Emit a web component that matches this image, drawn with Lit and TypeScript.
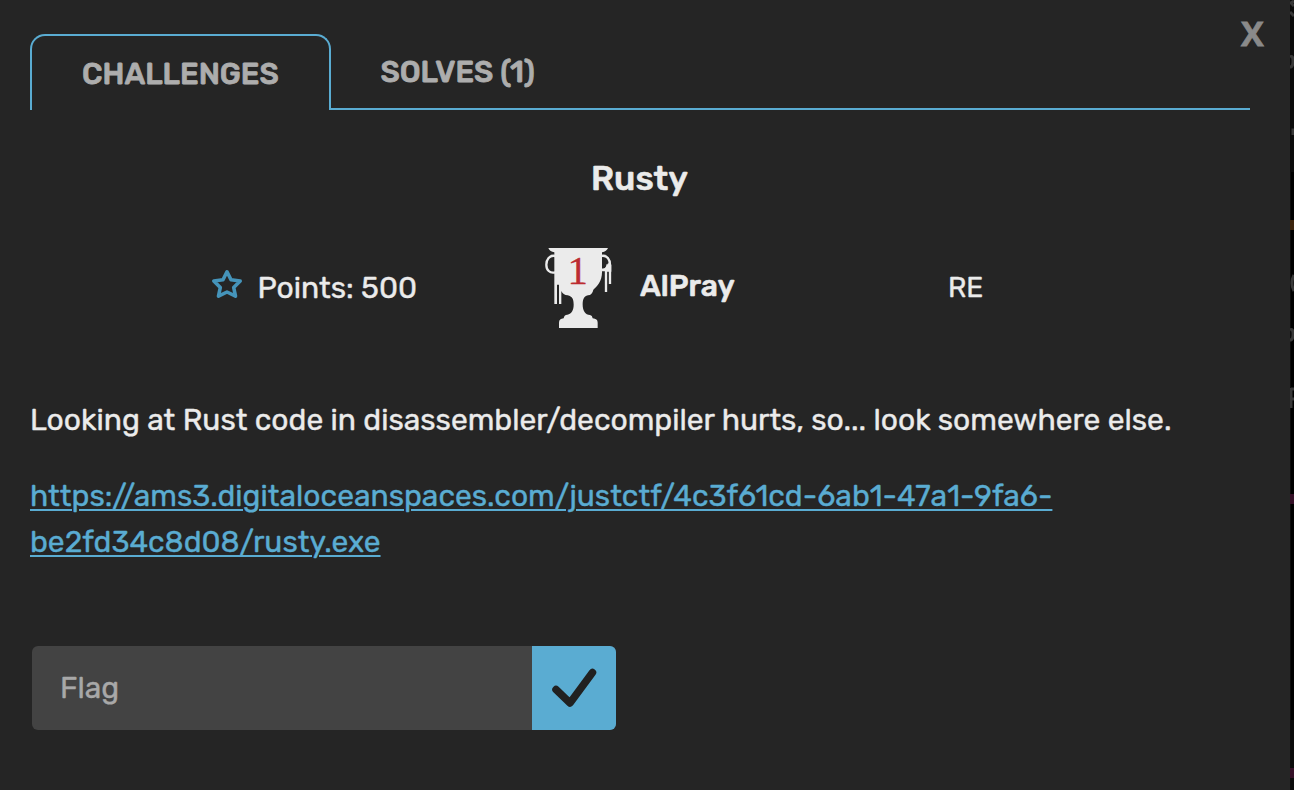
import { LitElement, html, css } from "lit";
import { customElement } from "lit/decorators.js";

@customElement("app-root")
export class AppRoot extends LitElement {
  static styles = css`
    :host { display: block; width: 1294px; height: 790px; overflow: hidden; background: #000; font-family: Rubik, Roboto, sans-serif; color: #ebebeb; -webkit-text-stroke-width: 0.4px; }
    * { box-sizing: border-box; }
    .page { display: flex; height: 790px; }
    .modal { width: 1290px; height: 790px; background: #252525; padding: 34px 40px 0 30px; position: relative; }
    .close { position: absolute; left: 1241px; top: 13px; font: 700 34px/40px "Open Sans", sans-serif; color: #8a8a8a; border: 0; background: none; padding: 0; -webkit-text-stroke-width: 0.8px; }
    .tabs { display: flex; height: 76px; font-size: 30px; font-weight: 500; color: #adadad; white-space: nowrap; -webkit-text-stroke-width: 0.8px; }
    .tab { width: 301px; border: 2px solid #5aacd2; border-bottom: 0; border-radius: 15px 15px 0 0; padding: 20px 0 0 50px; line-height: 36px; }
    .tab2 { flex: 1; border-bottom: 2px solid #5aacd2; padding: 20px 0 0 49.500px; line-height: 36px; }
    h1 { margin: 46px 0 0; padding-right: 1px; text-align: center; font-size: 34.300px; line-height: 46px; font-weight: 500; -webkit-text-stroke-width: 0.6px; }
    .info { display: flex; align-items: center; margin-top: 44px; height: 84px; padding-left: 181px; font-size: 30px; white-space: nowrap; }
    .points { display: flex; align-items: center; width: 334px; }
    .star { width: 32px; height: 32px; margin-right: 14.500px; flex: none; position: relative; top: -3px; }
    .cup { width: 70px; height: 82px; flex: none; }
    .place { font-family: "Liberation Serif", serif; font-size: 122px; fill: #bc2c30; stroke: #bc2c30; -webkit-text-stroke-width: 3.200px; }
    .first { display: flex; align-items: center; width: 403px; font-weight: 500; -webkit-text-stroke-width: 0.6px; }
    .first span { padding: 0 0 4px 25px; }
    .cat { font-size: 28px; padding-bottom: 2px; }
    p { margin: 0; font-size: 30px; line-height: 46px; white-space: nowrap; }
    .desc { margin-top: 67px; }
    .link { margin-top: 30px; }
    a { color: #5aacd2; text-decoration: underline; text-decoration-thickness: 2px; text-underline-offset: 3px; }
    .form { display: flex; margin: 81px 0 0 2px; width: 584px; height: 84px; border-radius: 6px; overflow: hidden; background: #434343; }
    .field { flex: 1; padding-left: 28px; font-size: 30px; line-height: 84px; color: #a8a8a8; }
    .send { width: 84px; height: 84px; background: #5aacd2; border: 0; padding: 0; border-radius: 0 4px 4px 0; }
    .send svg { display: block; }
    .behind { width: 4px; height: 790px; flex: none; display: block; }
  `;

  render() {
    return html`<div class="page">
      <main class="modal">
        <button class="close">X</button>
        <nav class="tabs"><div class="tab">CHALLENGES</div><div class="tab2">SOLVES (1)</div></nav>
        <h1>Rusty</h1>
        <section class="info">
          <div class="points">
            <svg class="star" viewBox="0 0 32 32"><path d="M16 2.800L20 10.800L29.200 12L22.700 18.500L24.500 27.200L16 23L7.500 27.200L9.300 18.500L2.800 12L12 10.800Z" fill="none" stroke="#4594ba" stroke-width="3.600" stroke-linejoin="round"/></svg>
            <span>Points: 500</span>
          </div>
          <div class="first">
            <svg class="cup" viewBox="45 36 210 246">
              <path fill="#ebebeb" d="M55 39H234Q230 49 216 52V112C216 138 202 154 190 164Q187 180 174 181C160 184 158 196 158 209C158 226 166 239 180 240Q187 241 188 250Q203 251 203 263V279H87V263Q87 251 101 250Q102 240 112 239C126 236 131 223 131 209C131 193 127 184 113 181Q99 180 94 168V207H87V149H81V207H73V52Q60 50 55 39Z"/>
              <path fill="none" stroke="#ebebeb" stroke-width="7" d="M76 63C58 59 49 74 49 89C49 105 59 116 76 112M213 63C232 59 240 74 240 89V147M213 104H221Q231 103 233 88M228 100V171"/>
              <path fill="#ebebeb" d="M216 109V103Q232 99 234 84L244 89V110H231V109Z"/>
              <text class="place" x="143" y="146" text-anchor="middle">1</text>
            </svg>
            <span>AlPray</span>
          </div>
          <div class="cat">RE</div>
        </section>
        <p class="desc">Looking at Rust code in disassembler/decompiler hurts, so... look somewhere else.</p>
        <p class="link"><a>https://ams3.digitaloceanspaces.com/justctf/4c3f61cd-6ab1-47a1-9fa6-<br>be2fd34c8d08/rusty.exe</a></p>
        <div class="form"><div class="field">Flag</div><button class="send"><svg width="84" height="84" viewBox="0 0 84 84"><path d="M24 43.5L38 57L60.500 26.500" fill="none" stroke="#212121" stroke-width="7.500" stroke-linecap="round" stroke-linejoin="round"/></svg></button></div>
      </main>
      <svg class="behind" viewBox="0 0 4 790">
        <path fill="#0b0b0b" d="M0 0H4V172H2V710H4V790H0Z"/><path fill="#000" d="M0 172H4V720H0Z"/><path fill="#0d0d0d" d="M0 172H1V790H0Z"/>
        <path fill="#3c240d" d="M0 220H4V230H0Z"/><path fill="#351027" d="M0 494H4V504H0ZM0 768H4V778H0Z"/>
        <path fill="none" stroke="#383838" stroke-width="3" d="M4 1L1 3L4 6M0 12L4 16M0 57Q3 55 3 61T0 67M3 135V130H4M4 275Q0 283 4 291M0 330Q3 328 3 334T0 340M1 388V408M1 389H4M1 399H4"/>
      </svg>
    </div>`;
  }
}
